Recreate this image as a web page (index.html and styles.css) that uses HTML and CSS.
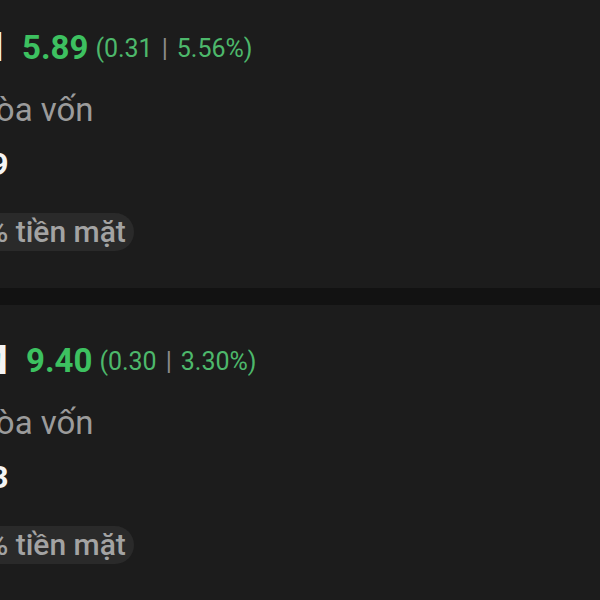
FILE: index.html
```html
<!DOCTYPE html>
<html lang="vi">
<head>
<meta charset="utf-8">
<link rel="stylesheet" href="styles.css">
</head>
<body>
<div class="list">
  <section class="card">
    <div class="head">
      <div class="tick tick-a"><span class="tick-text">SSI</span></div>
      <span class="price">5.89</span>
      <span class="change">(0.31<span class="sep">|</span>5.56%)</span>
    </div>
    <div class="info">
      <div class="label">Giá hòa vốn</div>
      <div class="value">15.59</div>
      <div class="pill">100% tiền mặt</div>
    </div>
  </section>
  <div class="divider"></div>
  <section class="card">
    <div class="head">
      <div class="tick tick-b"><span class="tick-text">VNM</span></div>
      <span class="price price-b">9.40</span>
      <span class="change">(0.30<span class="sep">|</span>3.30%)</span>
    </div>
    <div class="info">
      <div class="label">Giá hòa vốn</div>
      <div class="value">19.13</div>
      <div class="pill">100% tiền mặt</div>
    </div>
  </section>
</div>
</body>
</html>
```

FILE: styles.css
```css
html, body {
  margin: 0;
  padding: 0;
  background: #1c1c1c;
  overflow: hidden;
}
body {
  font-family: Roboto, "Noto Sans", sans-serif;
  width: 600px;
  height: 600px;
}
.list {
  margin-top: -8px;
}
.card {
  background: #1c1c1c;
  padding: 36px 0 37px 0;
  height: 223px;
}
.divider {
  height: 17px;
  background: #121212;
}
.head {
  display: flex;
  align-items: center;
  height: 40px;
  line-height: 40px;
}
.tick {
  display: flex;
  justify-content: flex-end;
  width: 4px;
  flex: none;
}
.tick-b {
  width: 8px;
}
.tick-text {
  font-size: 40px;
  font-weight: 700;
  color: #f4f4f4;
  white-space: nowrap;
}
.price {
  margin-left: 18px;
  font-size: 33px;
  font-weight: 700;
  color: #3dc160;
}
.price-b {
  margin-left: 18px;
}
.change {
  margin-left: 7px;
  margin-top: 2px;
  font-size: 25px;
  color: #4db86b;
}
.sep {
  color: #8c8c8c;
  margin: 0 9px;
}
.info {
  margin-left: -74px;
}
.label {
  margin-top: 24px;
  margin-left: -5px;
  height: 36px;
  line-height: 36px;
  font-size: 33px;
  color: #9b9b9b;
  white-space: nowrap;
}
.value {
  margin-top: 18px;
  height: 36px;
  line-height: 36px;
  font-size: 32px;
  font-weight: 700;
  color: #f4f4f4;
}
.pill {
  margin-top: 31px;
  display: inline-block;
  height: 38px;
  line-height: 38px;
  padding: 0 8px 0 9px;
  border-radius: 19px;
  background: #2a2a2a;
  font-size: 30px;
  font-weight: 500;
  color: #a3a3a3;
  white-space: nowrap;
}
```
